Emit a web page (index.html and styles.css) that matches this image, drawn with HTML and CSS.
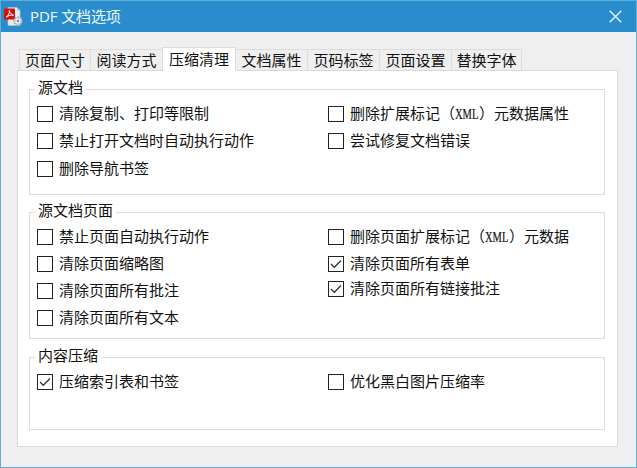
FILE: index.html
```html
<!DOCTYPE html>
<html lang="zh-CN">
<head>
	<title>PDF 文档选项</title>
	<meta charset="UTF-8">
	<link rel="stylesheet" href="styles.css">
</head>
<body>
	<div class="window">
		<div class="titlebar">
			<svg class="logo" width="20" height="20" viewBox="0 0 20 20">
				<path d="M4 .5h9l3 3V18.500H4z" fill="#e9ecef" stroke="#b9c3cb" stroke-width=".6"/>
				<path d="M13 .5v3h3z" fill="#b4bcc3"/>
				<rect x="0" y="1.500" width="11" height="11" rx="1" fill="#d3120f"/>
				<path d="M2.200 10.300C4.500 9 5.700 5.800 5.300 3.500c1 3 2.500 4.500 4.200 4.700C7 7.800 4.500 8.400 2.200 10.300z" fill="none" stroke="#fff" stroke-width="1"/>
				<circle cx="14" cy="14" r="3.900" fill="#e3e6e8" stroke="#9aa2a9" stroke-width="1.800" stroke-dasharray="1.600 1.300"/>
				<circle cx="14" cy="14" r="3.200" fill="#e9ecee" stroke="#b3bac0" stroke-width=".7"/>
				<circle cx="14" cy="14" r="1.200" fill="#7d8790"/>
			</svg>
			<span class="title">PDF 文档选项</span>
			<svg class="close" width="13" height="13" viewBox="0 0 13 13">
				<path d="M.7.7l11.600 11.600M12.300.7L.7 12.300" stroke="#e6f8ff" stroke-width="1.400"/>
			</svg>
		</div>
		<div class="main">
			<ul class="tabs">
				<li>页面尺寸</li>
				<li>阅读方式</li>
				<li class="active">压缩清理</li>
				<li>文档属性</li>
				<li>页码标签</li>
				<li>页面设置</li>
				<li>替换字体</li>
			</ul>
			<div class="panel">
				<div class="group source">
					<h3>源文档</h3>
					<ul class="col">
						<li><i class="box"></i><span>清除复制、打印等限制</span></li>
						<li><i class="box"></i><span>禁止打开文档时自动执行动作</span></li>
						<li class="low"><i class="box"></i><span>删除导航书签</span></li>
					</ul>
					<ul class="col">
						<li><i class="box"></i><span>删除扩展标记（<b>XML</b>）元数据属性</span></li>
						<li><i class="box"></i><span>尝试修复文档错误</span></li>
					</ul>
				</div>
				<div class="group pages">
					<h3>源文档页面</h3>
					<ul class="col">
						<li><i class="box"></i><span>禁止页面自动执行动作</span></li>
						<li><i class="box"></i><span>清除页面缩略图</span></li>
						<li><i class="box"></i><span>清除页面所有批注</span></li>
						<li><i class="box"></i><span>清除页面所有文本</span></li>
					</ul>
					<ul class="col">
						<li><i class="box"></i><span>删除页面扩展标记（<b>XML</b>）元数据</span></li>
						<li><i class="box"><svg width="14" height="14" viewBox="0 0 14 14"><path d="M2 7l3.300 3.300L12 3.500"/></svg></i><span>清除页面所有表单</span></li>
						<li class="high"><i class="box"><svg width="14" height="14" viewBox="0 0 14 14"><path d="M2 7l3.300 3.300L12 3.500"/></svg></i><span>清除页面所有链接批注</span></li>
					</ul>
				</div>
				<div class="group content">
					<h3>内容压缩</h3>
					<ul class="col">
						<li><i class="box"><svg width="14" height="14" viewBox="0 0 14 14"><path d="M2 7l3.300 3.300L12 3.500"/></svg></i><span>压缩索引表和书签</span></li>
					</ul>
					<ul class="col">
						<li><i class="box"></i><span>优化黑白图片压缩率</span></li>
					</ul>
				</div>
			</div>
		</div>
	</div>
</body>
</html>
```
FILE: styles.css
```css
*{
	margin: 0;
	padding: 0;
	box-sizing: border-box;
}
body{
	font: 15px/20px "Noto Sans CJK SC", sans-serif;
	color: #111;
}
li{
	list-style: none;
	white-space: nowrap;
}
.window{
	width: 637px;
	height: 468px;
	background: #efefef;
	border: 1px solid #5fb0d8;
	overflow: hidden;
}
.titlebar{
	height: 31px;
	padding: 0 14px 0 3px;
	display: flex;
	align-items: center;
	background: #298ccc;
	color: #e9faff;
}
.title{
	flex: 1;
	margin-left: 6px;
	padding-bottom: 2px;
	font-family: "Open Sans", "Noto Sans CJK SC", sans-serif;
	letter-spacing: -.1px;
}
.main{
	padding: 15px 18px 0 16px;
}
.tabs{
	display: flex;
	align-items: flex-end;
	height: 23px;
	padding-left: 2px;
}
.tabs li{
	width: 72px;
	height: 21px;
	line-height: 20px;
	text-align: center;
	border: 1px solid #dcdcdc;
	border-left: 0;
	border-bottom: 0;
}
.tabs li:first-child{
	border-left: 1px solid #dcdcdc;
}
.tabs li:last-child{
	width: 70px;
}
.tabs .active{
	width: 74px;
	height: 24px;
	line-height: 21px;
	margin: 0 0 -1px -1px;
	background: #fff;
	border-left: 1px solid #dcdcdc;
	position: relative;
}
.panel{
	height: 377px;
	padding: 18px 12px 0 11px;
	background: #fff;
	border: 1px solid #d9d9d9;
}
.group{
	display: grid;
	grid-template-columns: 291px 1fr;
	align-items: start;
	padding: 16px 0 0 7px;
	border: 1px solid #dcdcdc;
	position: relative;
}
.source{
	height: 106px;
	margin-bottom: 17px;
}
.pages{
	height: 127px;
	margin-bottom: 18px;
}
.content{
	height: 73px;
}
/* 标题压在边框线上 */
.group h3{
	position: absolute;
	left: 5px;
	top: -13px;
	padding: 0 3px;
	font-size: 15px;
	font-weight: normal;
	background: #fff;
}
.col li{
	display: flex;
	align-items: center;
	height: 16px;
	margin-bottom: 11px;
}
.col span{
	padding-bottom: 2px;
}
.col .low{
	margin-top: 12px;
}
.col .high{
	margin-top: -2px;
}
.box{
	width: 16px;
	height: 16px;
	margin-right: 6px;
	border: 1px solid #222;
}
.box svg{
	display: block;
}
.box path{
	fill: none;
	stroke: #333;
	stroke-width: 1.3;
}
/* 半角窄体英文 */
.col b{
	display: inline-block;
	width: 24px;
	font: 15px/20px "Liberation Serif", serif;
	-webkit-text-stroke: .2px #111;
	transform: scaleX(.7);
	transform-origin: 0 50%;
}
```
